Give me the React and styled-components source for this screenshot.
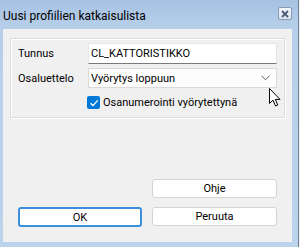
import React from "react";
import styled, { createGlobalStyle } from "styled-components";

const Global = createGlobalStyle`
  html, body {
    margin: 0;
    padding: 0;
    width: 300px;
    height: 247px;
    overflow: hidden;
    background: #b9d1ea;
  }
  * { box-sizing: border-box; }
`;

const Frame = styled.div`
  position: relative;
  width: 300px;
  height: 247px;
  display: flex;
  flex-direction: column;
  background: linear-gradient(180deg, #a6c2e2 0px, #b7cfea 28px, #bcd3ec 100%);
  box-shadow: inset -1px 0 0 #f4f4f4, inset -2px 0 0 #6f7f93;
  font-family: Roboto, "Liberation Sans", Arial, sans-serif;
  font-size: 11px;
  color: #000;
`;

const TitleBar = styled.div`
  height: 29px;
  display: flex;
  align-items: center;
  justify-content: space-between;
  padding: 2px 8px 0 3px;
`;

const Title = styled.span`
  font-size: 12px;
  color: #000;
`;

const CloseButton = styled.div`
  width: 14px;
  height: 13px;
  margin-top: -4px;
  border: 1px solid #8b9bb2;
  border-radius: 2px;
  background: linear-gradient(180deg, #f4f7fb, #d8e2ef);
  display: flex;
  align-items: center;
  justify-content: center;
`;

const Client = styled.div`
  flex: 1;
  margin: 0 8px 5px 3px;
  background: #f0f0f0;
  display: flex;
  flex-direction: column;
  padding: 9px 7px 15px 7px;
`;

const GroupBox = styled.div`
  border: 1px solid #dcdcdc;
  box-shadow: inset 1px 1px 0 #fff, 1px 1px 0 #fff;
  height: 80px;
  padding: 4px 7px 0 7px;
  display: flex;
  flex-direction: column;
`;

const Row = styled.div`
  display: flex;
  align-items: center;
  height: ${(p) => p.$h}px;
  margin-bottom: ${(p) => p.$mb || 0}px;
`;

const Label = styled.span`
  width: 70px;
`;

const TextBox = styled.div`
  flex: 1;
  height: 100%;
  background: #fff;
  border: 1px solid #e6e6e6;
  border-bottom: 1px solid #7a7a7a;
  display: flex;
  align-items: center;
  padding-left: 2px;
`;

const Combo = styled.div`
  flex: 1;
  height: 100%;
  background: #fdfdfd;
  border: 1px solid #d9d9d9;
  display: flex;
  align-items: center;
  justify-content: space-between;
  padding: 0 6px 0 2px;
`;

const CheckRow = styled.div`
  display: flex;
  align-items: center;
  gap: 3px;
  margin-left: 69px;
  margin-top: 8px;
`;

const CheckBox = styled.div`
  width: 13px;
  height: 13px;
  border-radius: 2px;
  background: #0078d7;
  display: flex;
  align-items: center;
  justify-content: center;
`;

const Buttons = styled.div`
  margin-top: auto;
  padding: 0 8px 0 8px;
  display: grid;
  grid-template-columns: 124px 125px;
  column-gap: 10px;
  row-gap: 9px;
`;

const Button = styled.div`
  grid-column: ${(p) => p.$col};
  height: ${(p) => (p.$default ? 20 : 19)}px;
  background: #fff;
  border: ${(p) => (p.$default ? "2px solid #3c8fd8" : "1px solid #d4d4d4")};
  border-radius: 3px;
  display: flex;
  align-items: center;
  justify-content: center;
`;

const Cursor = styled.svg`
  position: absolute;
  left: 269px;
  top: 88px;
`;

export default function App() {
  return (
    <>
      <Global />
      <Frame>
        <TitleBar>
          <Title>Uusi profiilien katkaisulista</Title>
          <CloseButton>
            <svg width="8" height="8" viewBox="0 0 8 8">
              <path d="M1 1 L7 7 M7 1 L1 7" stroke="#4a5a72" strokeWidth="1.8" />
            </svg>
          </CloseButton>
        </TitleBar>
        <Client>
          <GroupBox>
            <Row $h={21} $mb={4}>
              <Label>Tunnus</Label>
              <TextBox>CL_KATTORISTIKKO</TextBox>
            </Row>
            <Row $h={20}>
              <Label>Osaluettelo</Label>
              <Combo>
                <span>Vyörytys loppuun</span>
                <svg width="9" height="6" viewBox="0 0 9 6">
                  <path d="M0.5 0.8 L4.5 4.8 L8.5 0.8" fill="none" stroke="#606060" strokeWidth="1" />
                </svg>
              </Combo>
            </Row>
            <CheckRow>
              <CheckBox>
                <svg width="10" height="10" viewBox="0 0 10 10">
                  <path d="M1.5 5.2 L4 7.6 L8.7 2.4" fill="none" stroke="#fff" strokeWidth="1.4" />
                </svg>
              </CheckBox>
              <span>Osanumerointi vyörytettynä</span>
            </CheckRow>
          </GroupBox>
          <Buttons>
            <Button $col={2}>Ohje</Button>
            <Button $col={1} $default>OK</Button>
            <Button $col={2}>Peruuta</Button>
          </Buttons>
        </Client>
        <Cursor width="13" height="19" viewBox="0 0 13 19">
          <path d="M0.5 0.5 L0.5 15.5 L4 12.2 L6.6 18 L8.8 17 L6.3 11.4 L11 11.4 Z" fill="#fff" stroke="#000" strokeWidth="1" />
        </Cursor>
      </Frame>
    </>
  );
}
